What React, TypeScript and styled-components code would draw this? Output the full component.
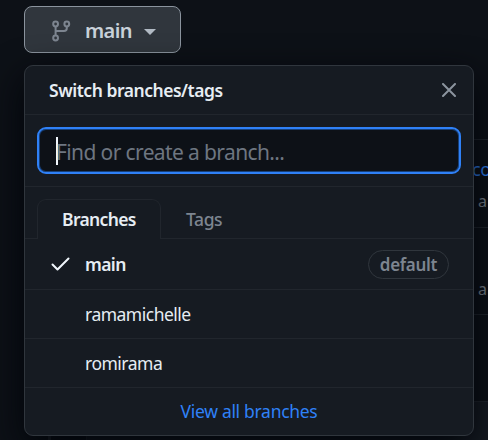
import React from "react";
import styled, { createGlobalStyle } from "styled-components";

const Global = createGlobalStyle`
  * { box-sizing: border-box; }
  html, body { margin: 0; background: #0d1117; overflow: hidden; }
  body { font-family: "Noto Sans", sans-serif; color: #e6edf3; }
  button { font-family: inherit; margin: 0; }
`;

const Page = styled.main`
  position: relative;
  width: 488px;
  height: 440px;
  padding: 6px 0 0 24px;
  overflow: hidden;
  background: #0d1117;
`;

const Timeline = styled.div`
  position: absolute;
  inset: 139px 0 0 48px;
  display: grid;
  grid-template-columns: 38px 1fr;
`;

const Rail = styled.div`
  width: 3px;
  background: #21262d;
`;

const Commits = styled.div`
  display: flex;
  flex-direction: column;
  border-left: 1px solid #21262d;
`;

const Commit = styled.div<{ $height: number; $filled?: boolean }>`
  height: ${(p) => p.$height}px;
  flex: none;
  padding: 15px 0 0 385px;
  border-top: 1px solid #21262d;
  background: ${(p) => (p.$filled ? "#161b22" : "transparent")};
  white-space: nowrap;
`;

const CommitTitle = styled.div`
  height: 28px;
  font-size: 18px;
  line-height: 28px;
  letter-spacing: -0.5px;
  color: #2f81f7;
`;

const CommitMeta = styled.div`
  padding: 4px 0 0 6px;
  font-size: 16px;
  line-height: 28px;
  color: #7d8590;
`;

const BranchButton = styled.button`
  display: flex;
  align-items: center;
  width: 157px;
  height: 47px;
  padding: 0 0 0 27px;
  border: 1px solid #8b949e;
  border-radius: 8px;
  background: #30363d;
  color: #c9d1d9;
`;

const BranchIcon = styled.svg`
  width: 19px;
  height: 22px;
  margin-top: 3px;
  flex: none;
`;

const BranchName = styled.span`
  width: 47px;
  margin: 3px 0 0 14px;
  font-size: 20px;
  font-weight: 600;
  line-height: 30px;
  letter-spacing: -0.6px;
  text-align: left;
`;

const Caret = styled.span`
  margin: 5px 0 0 12px;
  border: 6px solid transparent;
  border-top-color: #b1bac4;
  border-bottom: 0;
`;

const Menu = styled.section`
  position: absolute;
  left: 24px;
  top: 65px;
  width: 450px;
  height: 371px;
  border: 1px solid #30363d;
  border-radius: 9px;
  background: #161b22;
  box-shadow: 0 12px 36px #010409;
  overflow: hidden;
`;

const Header = styled.header`
  display: flex;
  align-items: center;
  justify-content: space-between;
  height: 49px;
  padding: 0 17px 0 24px;
  border-bottom: 1px solid #21262d;
`;

const Label = styled.span<{ $size: number; $weight?: number; $spacing?: number }>`
  font-size: ${(p) => p.$size}px;
  font-weight: ${(p) => p.$weight ?? 400};
  letter-spacing: ${(p) => p.$spacing ?? 0}px;
  line-height: 28px;
  white-space: nowrap;
`;

const CloseIcon = styled.svg`
  width: 14px;
  height: 14px;
`;

const SearchArea = styled.div`
  height: 72px;
  padding: 12px;
  border-bottom: 1px solid #21262d;
`;

const SearchBox = styled.div`
  display: flex;
  align-items: center;
  width: 424px;
  height: 47px;
  padding: 2px 0 0 16px;
  border: 2px solid #2f81f7;
  border-radius: 9px;
  box-shadow: inset 0 0 0 1px #174079;
  background: #0d1117;
  color: #6e7681;
`;

const TextCursor = styled.i`
  width: 2px;
  height: 28px;
  margin: -1px -2px 0 1px;
  background: #f0f6fc;
`;

const Tabs = styled.nav`
  display: flex;
  height: 52px;
  padding: 12px 0 0 12px;
  box-shadow: inset 0 -1px #21262d;
`;

const Tab = styled.button<{ $active?: boolean }>`
  display: flex;
  align-items: center;
  height: 40px;
  padding: 0 24px 2px;
  border: 1px solid ${(p) => (p.$active ? "#21262d" : "transparent")};
  border-bottom: 0;
  border-radius: 9px 9px 0 0;
  background: ${(p) => (p.$active ? "#161b22" : "transparent")};
  color: ${(p) => (p.$active ? "#e6edf3" : "#7d8590")};
  width: ${(p) => (p.$active ? "124px" : "auto")};
`;

const Row = styled.div<{ $height: number }>`
  display: grid;
  grid-template-columns: 34px 1fr auto;
  align-items: center;
  height: ${(p) => p.$height}px;
  padding: 0 24px 0 26px;
  border-bottom: 1px solid #21262d;
`;

const CheckIcon = styled.svg`
  display: block;
  width: 19px;
  height: 14px;
`;

const Badge = styled.span`
  display: flex;
  align-items: center;
  justify-content: center;
  width: 81px;
  height: 29px;
  margin-top: 1px;
  border: 1px solid #30363d;
  border-radius: 15px;
  color: #7d8590;
`;

const Footer = styled.footer`
  display: flex;
  align-items: center;
  justify-content: center;
  height: 46px;
  color: #2f81f7;
`;

const branches = [
  { name: "main", current: true, height: 51, spacing: -0.6 },
  { name: "ramamichelle", current: false, height: 49, spacing: -0.5 },
  { name: "romirama", current: false, height: 49, spacing: -0.5 },
];

export default function App() {
  return (
    <>
      <Global />
      <Page>
        <Timeline>
          <Rail />
          <Commits>
            <Commit $height={88}>
              <CommitTitle>co</CommitTitle>
              <CommitMeta>a</CommitMeta>
            </Commit>
            <Commit $height={87}>
              <CommitTitle />
              <CommitMeta>a</CommitMeta>
            </Commit>
            <Commit $height={87} />
            <Commit $height={60} $filled />
          </Commits>
        </Timeline>
        <BranchButton>
          <BranchIcon viewBox="0 0 19 22" fill="none" stroke="#7d8590" strokeWidth="2">
            <circle cx="3.6" cy="4" r="2.4" />
            <circle cx="14.8" cy="4" r="2.4" />
            <circle cx="3.6" cy="18" r="2.4" />
            <path d="M3.6 6.4v9.2M14.8 6.4v1.8a2.8 2.8 0 0 1-2.8 2.8H3.6" />
          </BranchIcon>
          <BranchName>main</BranchName>
          <Caret />
        </BranchButton>
        <Menu>
          <Header>
            <Label $size={17.5} $weight={600} $spacing={-0.47}>Switch branches/tags</Label>
            <CloseIcon viewBox="0 0 14 14" fill="none" stroke="#8b949e" strokeWidth="2" strokeLinecap="round">
              <path d="M1 1l12 12M13 1L1 13" />
            </CloseIcon>
          </Header>
          <SearchArea>
            <SearchBox>
              <TextCursor />
              <Label $size={21} $spacing={-0.62}>Find or create a branch...</Label>
            </SearchBox>
          </SearchArea>
          <Tabs>
            <Tab $active><Label $size={17.5} $weight={600} $spacing={-0.65}>Branches</Label></Tab>
            <Tab><Label $size={17.5} $weight={500} $spacing={-0.4}>Tags</Label></Tab>
          </Tabs>
          {branches.map((b) => (
            <Row key={b.name} $height={b.height}>
              <span>
                {b.current && (
                  <CheckIcon viewBox="0 0 19 14" fill="none" stroke="#f0f6fc" strokeWidth="2" strokeLinecap="round" strokeLinejoin="round">
                    <path d="M1.5 7.5l5 5L17.5 1.5" />
                  </CheckIcon>
                )}
              </span>
              <Label $size={17.5} $weight={b.current ? 600 : 400} $spacing={b.spacing}>{b.name}</Label>
              {b.current && <Badge><Label $size={17} $weight={600} $spacing={-0.3}>default</Label></Badge>}
            </Row>
          ))}
          <Footer><Label $size={17.5} $spacing={-0.3}>View all branches</Label></Footer>
        </Menu>
      </Page>
    </>
  );
}
